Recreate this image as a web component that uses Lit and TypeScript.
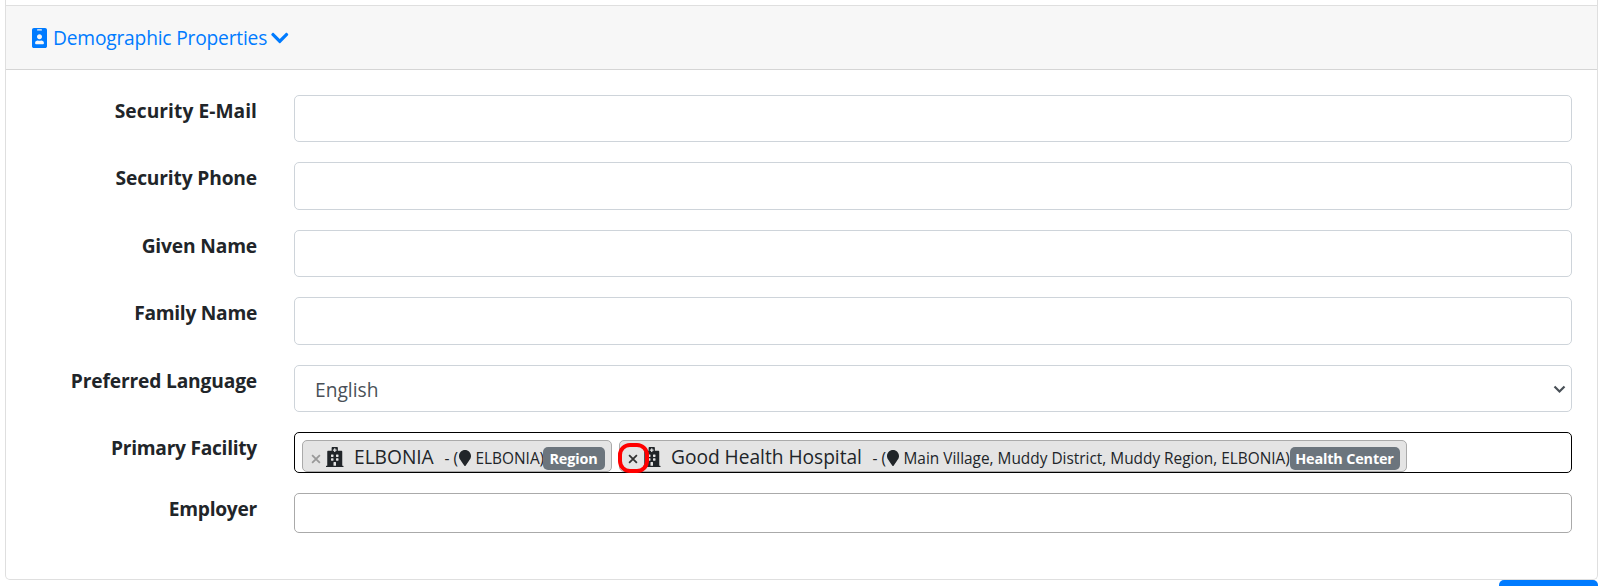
import { LitElement, html, css } from "lit";
import { customElement } from "lit/decorators.js";

const badge = html`<svg class="i-badge" viewBox="0 0 384 512"><path fill="currentColor" d="M336 0H48C21.5 0 0 21.5 0 48v416c0 26.5 21.5 48 48 48h288c26.5 0 48-21.5 48-48V48c0-26.5-21.5-48-48-48zM144 32h96c8.8 0 16 7.2 16 16s-7.2 16-16 16h-96c-8.8 0-16-7.2-16-16s7.2-16 16-16zm48 128c35.3 0 64 28.7 64 64s-28.7 64-64 64-64-28.7-64-64 28.7-64 64-64zm112 236.8c0 10.6-10 19.2-22.4 19.2H102.4C90 416 80 407.4 80 396.8v-19.2c0-31.8 30.1-57.6 67.2-57.6h5c12.3 5.1 25.7 8 39.8 8s27.6-2.9 39.8-8h5c37.1 0 67.2 25.8 67.2 57.6v19.2z"/></svg>`;
const chevron = html`<svg class="i-chevron" viewBox="0 0 448 512"><path fill="currentColor" d="M207.029 381.476L12.686 187.132c-9.373-9.373-9.373-24.569 0-33.941l22.667-22.667c9.357-9.357 24.522-9.375 33.901-.04L224 284.505l154.745-154.021c9.379-9.335 24.544-9.317 33.901.04l22.667 22.667c9.373 9.373 9.373 24.569 0 33.941L240.971 381.476c-9.373 9.372-24.569 9.372-33.942 0z"/></svg>`;
const hospital = html`<svg class="i-hospital" viewBox="0 0 448 512"><path fill="currentColor" d="M448 492v20H0v-20c0-6.627 5.373-12 12-12h20V120c0-13.255 10.745-24 24-24h88V24c0-13.255 10.745-24 24-24h112c13.255 0 24 10.745 24 24v72h88c13.255 0 24 10.745 24 24v360h20c6.627 0 12 5.373 12 12zM308 192h-40c-6.627 0-12 5.373-12 12v40c0 6.627 5.373 12 12 12h40c6.627 0 12-5.373 12-12v-40c0-6.627-5.373-12-12-12zm-168 64h40c6.627 0 12-5.373 12-12v-40c0-6.627-5.373-12-12-12h-40c-6.627 0-12 5.373-12 12v40c0 6.627 5.373 12 12 12zm104 128h-40c-6.627 0-12 5.373-12 12v84h64v-84c0-6.627-5.373-12-12-12zm64-96h-40c-6.627 0-12 5.373-12 12v40c0 6.627 5.373 12 12 12h40c6.627 0 12-5.373 12-12v-40c0-6.627-5.373-12-12-12zm-116 12c0-6.627-5.373-12-12-12h-40c-6.627 0-12 5.373-12 12v40c0 6.627 5.373 12 12 12h40c6.627 0 12-5.373 12-12v-40zM182 96h26v26a6 6 0 0 0 6 6h20a6 6 0 0 0 6-6V96h26a6 6 0 0 0 6-6V70a6 6 0 0 0-6-6h-26V38a6 6 0 0 0-6-6h-20a6 6 0 0 0-6 6v26h-26a6 6 0 0 0-6 6v20a6 6 0 0 0 6 6z"/></svg>`;
const marker = html`<svg class="i-marker" viewBox="0 0 384 512"><path fill="currentColor" d="M172.268 501.67C26.97 291.031 0 269.413 0 192 0 85.961 85.961 0 192 0s192 85.961 192 192c0 77.413-26.97 99.031-172.268 309.67-9.535 13.774-29.93 13.773-39.464 0z"/></svg>`;

interface Facility { key: string; name: string; place: string; type: string; marked?: boolean }
const facilities: Facility[] = [
  { key: "region", name: "ELBONIA", place: "ELBONIA)", type: "Region" },
  { key: "center", name: "Good Health Hospital", place: "Main Village, Muddy District, Muddy Region, ELBONIA)", type: "Health Center", marked: true },
];

@customElement("app-root")
export class AppRoot extends LitElement {
  static styles = css`
    :host { display: block; height: 586px; overflow: hidden; background: #fff; color: #212529;
      font-family: "Open Sans", "Noto Sans", sans-serif; font-size: 19.2px; line-height: 30px; }
    * { box-sizing: border-box; }
    svg { display: block; flex: none; }
    .page { width: 1593px; margin-left: 5px; }
    .card { height: 580px; border: 1px solid #dfdfdf; border-top: 0; border-radius: 0 0 5px 5px; padding-top: 5px; }
    .head { height: 65px; background: #f7f7f7; border-top: 1px solid #dfdfdf; border-bottom: 1px solid #d5d5d5;
      display: flex; align-items: center; padding: 1px 0 0 26px; color: #007bff; }
    .i-badge { width: 15px; height: 20px; margin-bottom: 1px; }
    .title { margin-left: 6px; width: 214px; white-space: nowrap; letter-spacing: -0.19px; }
    .i-chevron { width: 17.5px; height: 20px; margin-left: 4px; }
    .form { display: flex; flex-direction: column; gap: 20px; padding: 25px 25px 0 0; }
    .row { display: grid; grid-template-columns: 251px 1278px; column-gap: 37px; }
    .label { font-weight: 700; text-align: right; height: 30px; margin-top: 1px; white-space: nowrap; letter-spacing: -0.16px; }
    .label.loose { letter-spacing: 0.05px; }
    .label.snug { letter-spacing: -0.28px; }
    .box { border: 1px solid #ced4da; border-radius: 5px; background: #fff; height: 47px; display: flex; }
    .tall { height: 48px; }
    .select { align-items: center; justify-content: space-between; padding: 2px 5px 0 20px; color: #495057; }
    .caret { width: 13px; height: 9px; margin-bottom: 1px; }
    .multi { height: 41px; border-color: #000; padding: 7px 0 0 7px; gap: 7px; }
    .employer { height: 40px; border-color: #aaa; }
    .chip { height: 32px; border: 1px solid #aaa; border-radius: 5px; background: #e4e4e4; display: flex; align-items: center; white-space: nowrap; position: relative; }
    .region { width: 310px; }
    .center { width: 788px; }
    .x { width: 10px; height: 10px; margin: 5px 5px 0 8px; color: #999; }
    .center .x { color: #333; }
    .ring { position: absolute; left: -2px; top: 2px; width: 31px; height: 30px; border: 4px solid #f00; border-radius: 12px; }
    .i-hospital { width: 17.5px; height: 20px; margin-top: 1px; }
    .name { margin-left: 10.5px; padding-top: 2px; letter-spacing: -0.03px; }
    .region .name { width: 90.5px; }
    .center .name { width: 201.5px; }
    .small { font-size: 15.4px; padding-top: 5px; }
    .i-marker { width: 12px; height: 16px; margin-top: 4px; }
    .place { margin-left: 5px; }
    .region .place { width: 67px; }
    .center .place { width: 386px; }
    .pill { height: 23px; border-radius: 5px; background: #6c757d; color: #fff; font-weight: 700; font-size: 14.4px; letter-spacing: -0.15px; line-height: 23px; text-align: center; margin-top: 5px; }
    .region .pill { width: 62px; }
    .center .pill { width: 110px; }
    .dash { width: 14px; }
    .button { width: 99px; height: 40px; border-radius: 5px; background: #007bff; margin-left: auto; }
  `;

  private chip(f: Facility) {
    return html`<div class="chip ${f.key}">
      <svg class="x" viewBox="0 0 9 9"><path d="M1 1L8 8M8 1L1 8" stroke="currentColor" stroke-width="1.6"/></svg>
      ${hospital}<span class="name">${f.name}</span><span class="small dash">- (</span>${marker}<span class="small place">${f.place}</span><span class="pill">${f.type}</span>
      ${f.marked ? html`<span class="ring"></span>` : ""}
    </div>`;
  }

  render() {
    return html`<div class="page">
      <section class="card">
        <div class="head">${badge}<span class="title">Demographic Properties</span>${chevron}</div>
        <div class="form">
          <div class="row"><span class="label loose">Security E-Mail</span><div class="box"></div></div>
          <div class="row"><span class="label">Security Phone</span><div class="box tall"></div></div>
          <div class="row"><span class="label">Given Name</span><div class="box"></div></div>
          <div class="row"><span class="label snug">Family Name</span><div class="box tall"></div></div>
          <div class="row"><span class="label">Preferred Language</span><div class="box select"><span>English</span>
            <svg class="caret" viewBox="0 0 13 9"><path d="M1.5 1.5L6.5 6.5L11.5 1.5" fill="none" stroke="currentColor" stroke-width="2.2"/></svg></div></div>
          <div class="row"><span class="label snug">Primary Facility</span><div class="box multi">${facilities.map((f) => this.chip(f))}</div></div>
          <div class="row"><span class="label snug">Employer</span><div class="box employer"></div></div>
        </div>
      </section>
      <div class="button"></div>
    </div>`;
  }
}
